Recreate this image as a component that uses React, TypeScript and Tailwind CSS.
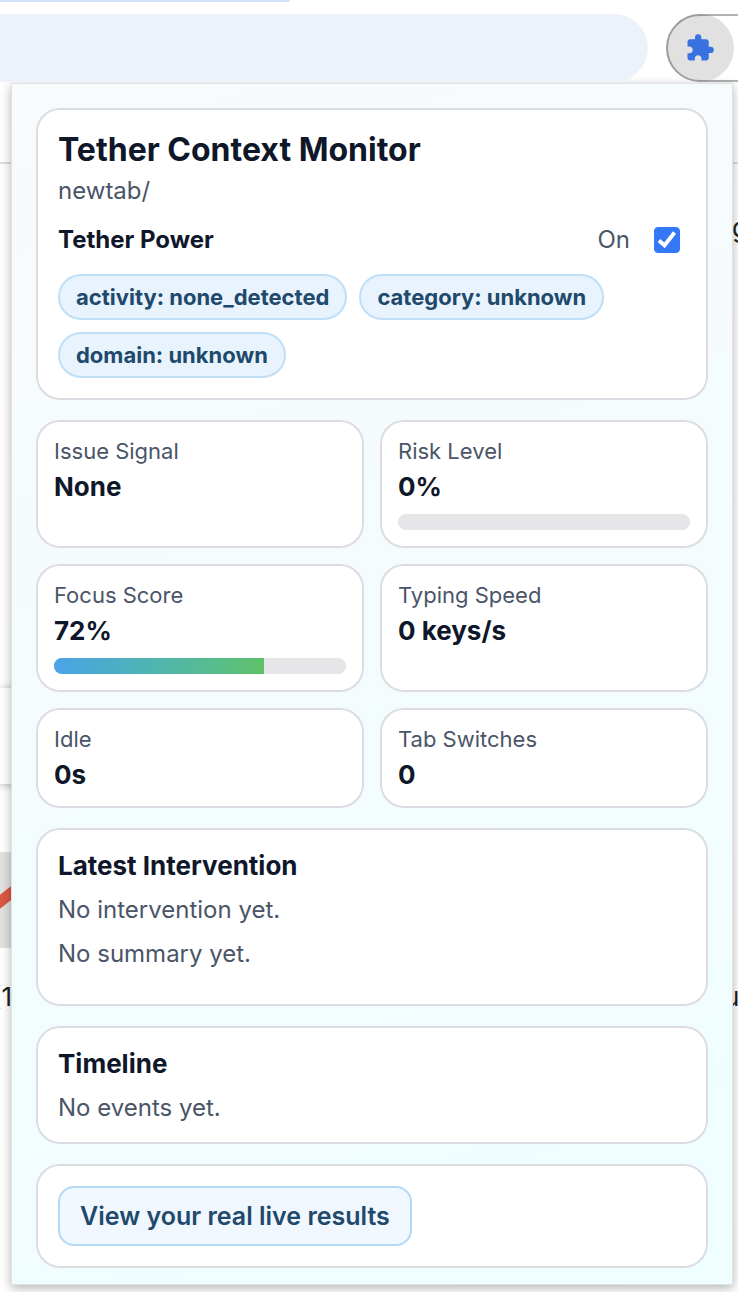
import { useState, type ReactNode } from "react";
import { MdExtension } from "react-icons/md";

function Card({ children, className = "" }: { children: ReactNode; className?: string }) {
  return (
    <section className={`rounded-3xl border-2 border-[#dcdde2] bg-white p-5 ${className}`}>{children}</section>
  );
}

function Chip({ children }: { children: ReactNode }) {
  return (
    <li className="rounded-full border-2 border-[#bfdff7] bg-[#e8f3fd] px-4 py-[7px] text-[22px] leading-7 font-bold text-[#20496c]">
      {children}
    </li>
  );
}

type MetricProps = { label: string; value: string; percent?: number };

function Metric({ label, value, percent }: MetricProps) {
  return (
    <div className="rounded-3xl border-2 border-[#dcdde2] bg-white p-4">
      <dt className="text-[22px] leading-[26px] text-[#4a5568]">{label}</dt>
      <dd className="mt-2 text-[26px] leading-[30px] font-bold text-[#0f172a]">
        {value}
        {percent !== undefined && (
          <div className="mt-3 h-4 overflow-hidden rounded-full bg-[#e6e6e8]">
            <div
              className="h-full bg-linear-to-r from-[#4aa3e6] to-[#5fc268]"
              style={{ width: `${percent}%` }}
            />
          </div>
        )}
      </dd>
    </div>
  );
}

const metrics: MetricProps[] = [
  { label: "Issue Signal", value: "None" },
  { label: "Risk Level", value: "0%", percent: 0 },
  { label: "Focus Score", value: "72%", percent: 72 },
  { label: "Typing Speed", value: "0 keys/s" },
  { label: "Idle", value: "0s" },
  { label: "Tab Switches", value: "0" },
];

function Toolbar() {
  return (
    <header className="relative isolate flex h-[83px] items-start overflow-hidden pt-3.5">
      <div className="absolute top-0 left-0 h-0.5 w-[290px] rounded-br-full bg-[#d3e2fc]" />
      <div className="h-[68px] flex-1 rounded-r-full bg-[#edf2fa]" />
      <div className="-mr-10 ml-[18px] h-[68px] w-28 rounded-l-full border-2 border-black/30">
        <button
          type="button"
          aria-label="Extensions"
          className="relative -z-10 -m-0.5 flex size-[68px] items-center justify-center rounded-full bg-[#e1e1e1] text-[#3871e0]"
        >
          <MdExtension size={30} />
        </button>
      </div>
    </header>
  );
}

function PageBehind() {
  return (
    <div className="absolute inset-0 -z-10 overflow-hidden text-[26px] leading-8 text-[#1f1f1f]">
      <div className="absolute inset-x-0 top-[162px] h-0.5 bg-[#dddee0]" />
      <div className="absolute top-[688px] left-0 h-24 w-10 bg-white shadow-[0_1px_8px_rgba(0,0,0,0.3)]" />
      <svg className="absolute top-[852px] left-0" width="20" height="96" viewBox="0 0 20 96">
        <path d="M0 0 H20 V96 H0z" fill="#e1e2df" />
        <path d="M-4 53 L20 34" stroke="#dc5744" strokeWidth="11" />
      </svg>
      <span className="absolute top-[981px] -left-2">(1</span>
      <span className="absolute top-[212px] left-[732px]">g</span>
      <span className="absolute top-[981px] left-[724px]">u</span>
    </div>
  );
}

export default function App() {
  const [power, setPower] = useState(true);

  return (
    <div className="relative isolate min-h-screen overflow-hidden bg-white pb-[7px] font-['Inter','Liberation_Sans',sans-serif]">
      <PageBehind />
      <Toolbar />
      <main className="mr-[5px] ml-[11px] flex flex-col gap-5 border border-[#dfe1e3] bg-linear-160 from-[#f8fafc] to-[#effeff] px-6 pt-6 pb-4 shadow-[0_3px_10px_rgba(0,0,0,0.3)]">
        <Card>
          <h1 className="text-[32px] leading-10 font-bold text-[#0f172a]">Tether Context Monitor</h1>
          <p className="mt-1.5 text-2xl leading-[30px] text-[#4a5568]">newtab/</p>
          <label className="mt-4 flex items-center pr-1.5 text-2xl leading-[36px] text-[#4a5568]">
            <span className="flex-1 font-bold text-[#0f172a]">Tether Power</span>
            <span>{power ? "On" : "Off"}</span>
            <span className="relative ml-6 size-[26px]">
              <input
                type="checkbox"
                checked={power}
                onChange={(e) => setPower(e.target.checked)}
                className="block size-[26px] appearance-none rounded-[4px] border border-[#3478f6] bg-white checked:bg-[#3478f6]"
              />
              <svg className="pointer-events-none absolute inset-0" width="26" height="26" viewBox="0 0 26 26" fill="none">
                <path d="M5 13.500 L10.500 18.500 L20.500 5.500" stroke="white" strokeWidth="3.900" />
              </svg>
            </span>
          </label>
          <ul className="mt-4 flex flex-wrap gap-3">
            <Chip>activity: none_detected</Chip>
            <Chip>category: unknown</Chip>
            <Chip>domain: unknown</Chip>
          </ul>
        </Card>
        <dl className="grid grid-cols-2 gap-4">
          {metrics.map((m) => (
            <Metric key={m.label} {...m} />
          ))}
        </dl>
        <Card className="pb-9">
          <h2 className="text-[26px] leading-8 font-bold text-[#0f172a]">Latest Intervention</h2>
          <p className="mt-3.5 text-2xl leading-7 text-[#4a5568]">No intervention yet.</p>
          <p className="mt-4 text-2xl leading-7 text-[#4a5568]">No summary yet.</p>
        </Card>
        <Card>
          <h2 className="text-[26px] leading-8 font-bold text-[#0f172a]">Timeline</h2>
          <p className="mt-3.5 text-2xl leading-7 text-[#4a5568]">No events yet.</p>
        </Card>
        <Card>
          <button
            type="button"
            className="block rounded-2xl border-2 border-[#b3d9f6] bg-[#f0f7fe] px-5 py-3 text-[25px] leading-8 font-semibold text-[#20496c]"
          >
            View your real live results
          </button>
        </Card>
      </main>
    </div>
  );
}
